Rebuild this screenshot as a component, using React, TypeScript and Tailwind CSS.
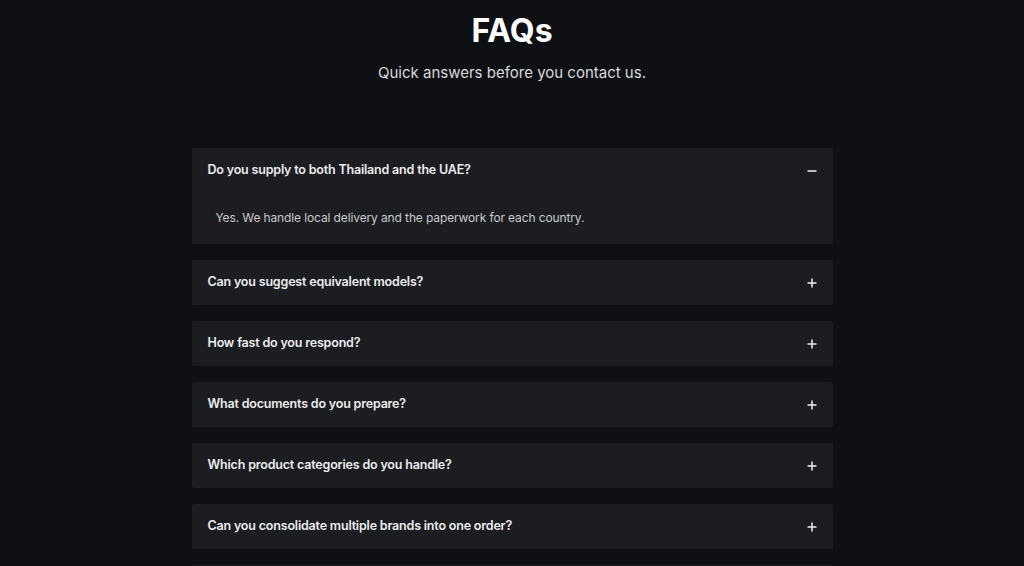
import { useState } from 'react';

const faqs = [
  {
    q: 'Do you supply to both Thailand and the UAE?',
    a: 'Yes. We handle local delivery and the paperwork for each country.',
  },
  { q: 'Can you suggest equivalent models?', a: 'Yes. We can propose compatible alternatives.' },
  { q: 'How fast do you respond?', a: 'Usually within one business day.' },
  { q: 'What documents do you prepare?', a: 'Invoices, packing lists and certificates of origin.' },
  { q: 'Which product categories do you handle?', a: 'Industrial, electrical and automation parts.' },
  { q: 'Can you consolidate multiple brands into one order?', a: 'Yes, into a single shipment.' },
  { q: 'Do you offer warranty support?', a: 'Yes, through the manufacturer.' },
];

function FaqItem({ q, a, open, onToggle }: { q: string; a: string; open: boolean; onToggle: () => void }) {
  return (
    <div className="bg-[#1c1d21] rounded-[2px]">
      <button
        onClick={onToggle}
        className="w-full flex items-center justify-between pl-4 pr-[13px] h-[45px] text-left"
      >
        <span className="text-[12.5px] font-semibold tracking-[-0.015em] text-[#ececee]">{q}</span>
        <span className="w-4 flex justify-center text-white">
          {open ? (
            <svg width="10" height="10" viewBox="0 0 10 10">
              <rect x="0.5" y="4.2" width="9" height="1.6" fill="#e5e5e7" />
            </svg>
          ) : (
            <svg width="10" height="10" viewBox="0 0 10 10">
              <rect x="0.5" y="4.2" width="9" height="1.6" fill="#e5e5e7" />
              <rect x="4.2" y="0.5" width="1.6" height="9" fill="#e5e5e7" />
            </svg>
          )}
        </span>
      </button>
      {open && (
        <div className="px-6 pt-[15px] pb-4 text-[12px] leading-5 tracking-[-0.01em] text-[#c9cacd]">{a}</div>
      )}
    </div>
  );
}

export default function App() {
  const [open, setOpen] = useState(0);
  return (
    <div
      className="min-h-screen bg-[#0f1014] overflow-hidden"
      style={{ fontFamily: 'Inter, "Noto Sans", sans-serif' }}
    >
      <div className="h-[566px] overflow-hidden">
        <div className="text-center pt-[12px]">
          <h1 className="text-[32px] leading-[38px] font-bold text-white">FAQs</h1>
          <p className="mt-[11px] text-[15px] leading-6 text-[#d9dadd]">Quick answers before you contact us.</p>
        </div>
        <div className="w-[641px] mx-auto mt-[63px] flex flex-col gap-4">
          {faqs.map((f, i) => (
            <FaqItem key={i} q={f.q} a={f.a} open={open === i} onToggle={() => setOpen(open === i ? -1 : i)} />
          ))}
        </div>
      </div>
    </div>
  );
}
